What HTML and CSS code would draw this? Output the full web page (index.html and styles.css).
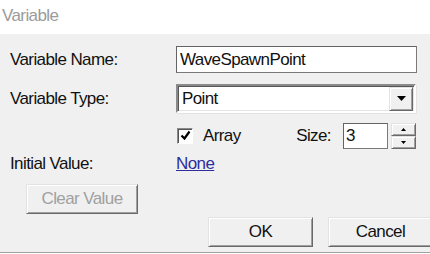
FILE: index.html
```html
<!DOCTYPE html>
<html lang="en">
<head>
    <meta charset="UTF-8">
    <title>Variable</title>
    <link rel="stylesheet" href="styles.css">
</head>
<body>
    <div class="titlebar">Variable</div>
    <div class="dialog">
        <div class="row row-name">
            <label class="label" for="varName">Variable Name:</label>
            <input class="textbox name-box" id="varName" type="text" value="WaveSpawnPoint">
        </div>
        <div class="row row-type">
            <span class="label">Variable Type:</span>
            <div class="combo">
                <span class="combo-text">Point</span>
                <span class="combo-btn">
                    <svg width="9" height="5" viewBox="0 0 9 5"><path d="M0 0h9L4.5 5z" fill="#000"/></svg>
                </span>
            </div>
        </div>
        <div class="row row-array">
            <span class="label"></span>
            <div class="array-line">
                <span class="check">
                    <svg width="11" height="11" viewBox="0 0 11 11"><path d="M1.5 5.5l3 3 5-7" fill="none" stroke="#000" stroke-width="2.2"/></svg>
                </span>
                <span class="array-text">Array</span>
                <div class="size-group">
                    <span>Size:</span>
                    <input class="textbox size-box" type="text" value="3">
                    <div class="spinner">
                        <span class="spin-btn">
                            <svg width="5" height="3" viewBox="0 0 5 3"><path d="M2.5 0L5 3H0z" fill="#000"/></svg>
                        </span>
                        <span class="spin-btn">
                            <svg width="5" height="3" viewBox="0 0 5 3"><path d="M0 0h5L2.5 3z" fill="#000"/></svg>
                        </span>
                    </div>
                </div>
            </div>
        </div>
        <div class="row row-initial">
            <span class="label">Initial Value:</span>
            <a class="link" href="#">None</a>
        </div>
        <button class="btn clear-btn" disabled>Clear Value</button>
        <div class="actions">
            <button class="btn">OK</button>
            <button class="btn">Cancel</button>
        </div>
    </div>
</body>
</html>
```

FILE: styles.css
```css
body {
    margin: 0;
    width: 430px;
    height: 254px;
    overflow: hidden;
    background: #fff;
    font-family: "Liberation Sans", Arial, sans-serif;
    font-size: 17px;
    letter-spacing: -0.6px;
    color: #111;
}
.titlebar {
    height: 34px;
    line-height: 32px;
    padding-left: 2px;
    color: #9b9b9b;
    background: #fff;
}
.dialog {
    height: 219px;
    box-sizing: border-box;
    padding: 12px 0 0 10px;
    background: #f0f0f0;
    border-bottom: 1px solid #a0a0a0;
}
.row {
    display: flex;
    align-items: center;
}
.label {
    width: 166px;
    flex: none;
}
.row-name {
    height: 27px;
    margin-bottom: 11px;
}
.row-type {
    height: 29px;
    margin-bottom: 9px;
}
.row-array {
    height: 27px;
    margin-bottom: 5px;
}
.row-initial {
    height: 20px;
}
.textbox {
    box-sizing: border-box;
    font: inherit;
    letter-spacing: inherit;
    color: #111;
    background: #fff;
    border: 1px solid #7a7a7a;
    border-top-color: #646464;
    border-left-color: #646464;
    padding: 0 3px;
    outline: none;
}
.name-box {
    width: 241px;
    height: 27px;
}
.combo {
    box-sizing: border-box;
    width: 240px;
    height: 29px;
    display: flex;
    align-items: center;
    background: #fff;
    border: 2px solid;
    border-color: #8a8a8a #fff #fff #8a8a8a;
    box-shadow: inset 1px 1px #555, inset -1px -1px #e3e3e3, 1px 1px #e3e3e3;
}
.combo-text {
    flex: 1;
    padding-left: 4px;
}
.combo-btn {
    box-sizing: border-box;
    width: 24px;
    height: 24px;
    margin-right: 1px;
    display: flex;
    align-items: center;
    justify-content: center;
    background: #f0f0f0;
    border: 1px solid;
    border-color: #e3e3e3 #696969 #696969 #e3e3e3;
    box-shadow: inset 1px 1px #fff, inset -1px -1px #a0a0a0;
}
.array-line {
    width: 240px;
    display: flex;
    align-items: center;
}
.check {
    box-sizing: border-box;
    width: 16px;
    height: 16px;
    margin-left: 1px;
    display: flex;
    align-items: center;
    justify-content: center;
    background: #fff;
    border: 1px solid;
    border-color: #8a8a8a #fff #fff #8a8a8a;
    box-shadow: inset 1px 1px #555;
}
.array-text {
    margin-left: 10px;
}
.size-group {
    margin-left: auto;
    display: flex;
    align-items: center;
}
.size-box {
    width: 45px;
    height: 26px;
    margin-left: 12px;
    padding: 0 2px;
}
.spinner {
    margin-left: 3px;
    display: flex;
    flex-direction: column;
}
.spin-btn {
    box-sizing: border-box;
    width: 25px;
    height: 13px;
    display: flex;
    align-items: center;
    justify-content: center;
    background: #f0f0f0;
    border: 1px solid;
    border-color: #e3e3e3 #696969 #696969 #e3e3e3;
    box-shadow: inset 1px 1px #fff, inset -1px -1px #a0a0a0;
}
.link {
    color: #2d2d9c;
    text-decoration: underline;
}
.btn {
    box-sizing: border-box;
    height: 30px;
    font: inherit;
    letter-spacing: inherit;
    color: #111;
    background: #f0f0f0;
    border: 1px solid;
    border-color: #e3e3e3 #696969 #696969 #e3e3e3;
    box-shadow: inset 1px 1px #fff, inset -1px -1px #a0a0a0;
    padding: 0;
}
.clear-btn {
    display: block;
    width: 112px;
    margin: 10px 0 0 16px;
    color: #a0a0a0;
}
.actions {
    display: flex;
    gap: 15px;
    margin-top: 3px;
    padding-left: 198px;
}
.actions .btn {
    width: 105px;
    flex: none;
}
```
